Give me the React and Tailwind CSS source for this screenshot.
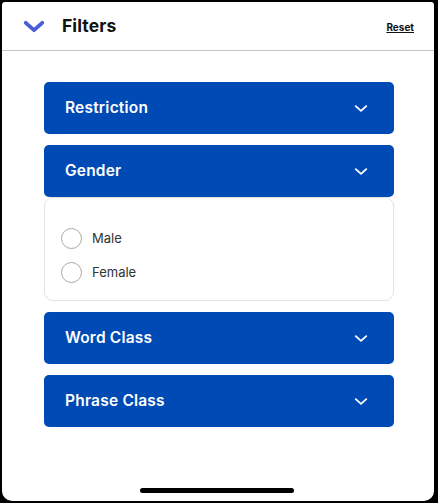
function Chevron({ className, stroke = 2.5 }) {
  return (
    <svg viewBox="0 0 24 14" className={className} fill="none">
      <path d="M3 3 L12 11 L21 3" stroke="currentColor" strokeWidth={stroke} strokeLinecap="round" strokeLinejoin="round" />
    </svg>
  );
}

function FilterButton({ label }) {
  return (
    <button className="w-full h-[52px] bg-[#004ab5] rounded-[5px] flex items-center justify-between pl-[21px] pr-[26px] text-white">
      <span className="text-[15.5px] font-semibold tracking-[0.2px]">{label}</span>
      <Chevron className="w-[14px] h-[9px]" stroke={3.2} />
    </button>
  );
}

function Radio({ label }) {
  return (
    <label className="flex items-center gap-[10px] h-[21px]">
      <span className="w-[21px] h-[21px] rounded-full border-[1.5px] border-[#a8a8a8] bg-white"></span>
      <span className="text-[13px] text-[#333]">{label}</span>
    </label>
  );
}

export default function App() {
  return (
    <div className="w-[438px] h-[503px] bg-black pl-[2px] pt-[2px] pr-[4px] pb-[2px]" style={{ fontFamily: "Inter, 'Noto Sans', sans-serif" }}>
      <div className="w-full h-full bg-white rounded-t-[3px] rounded-b-[10px] flex flex-col">
        <div className="h-[49px] flex items-center justify-between pl-[21px] pr-[20px] border-b border-[#c4c4c4] shrink-0">
          <div className="flex items-center gap-[17px]">
            <Chevron className="w-[22px] h-[13px] text-[#4a5ed8]" stroke={4.2} />
            <h1 className="text-[17.5px] font-bold text-[#111] tracking-[0.1px]">Filters</h1>
          </div>
          <button className="text-[10px] font-bold underline text-[#111] mt-[2px]">Reset</button>
        </div>

        <div className="pl-[42px] pr-[40px] pt-[31px] flex flex-col gap-[11px]">
          <FilterButton label="Restriction" />
          <div className="flex flex-col">
            <FilterButton label="Gender" />
            <div className="border border-[#e2e2e2] rounded-[9px] h-[104px] pl-[16px] pt-[30px] flex flex-col gap-[13px]">
              <Radio label="Male" />
              <Radio label="Female" />
            </div>
          </div>
          <FilterButton label="Word Class" />
          <FilterButton label="Phrase Class" />
        </div>

        <div className="mt-auto mb-[8px] flex justify-center pr-[2px]">
          <div className="w-[154px] h-[5px] rounded-full bg-black"></div>
        </div>
      </div>
    </div>
  );
}
